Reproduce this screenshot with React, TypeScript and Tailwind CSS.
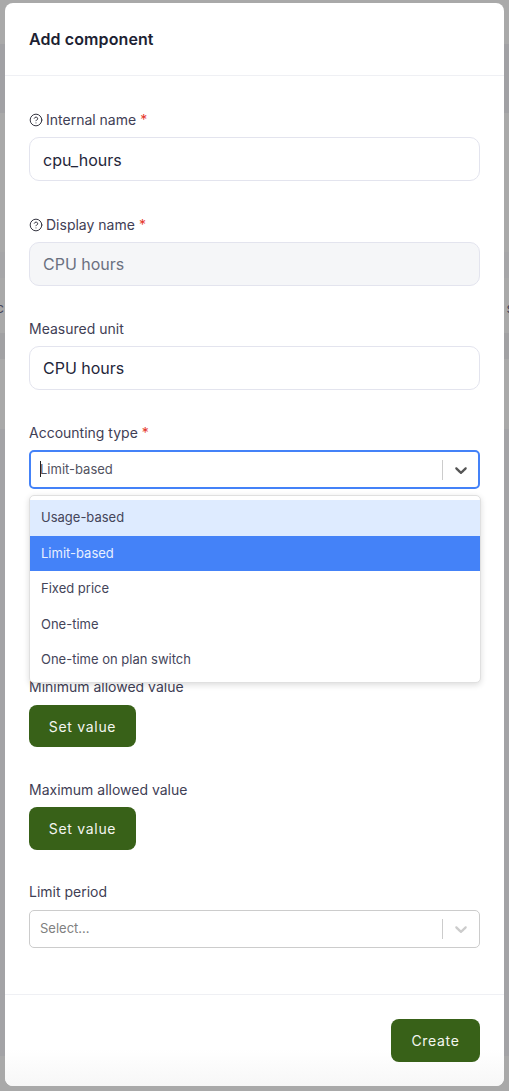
import { CircleHelp } from "lucide-react";

function Label({ text, help, req }: { text: string; help?: boolean; req?: boolean }) {
  return (
    <div className="flex items-center h-[17px] text-[14px] leading-[17px] font-normal text-[#3f4055]">
      {help && <CircleHelp size={14} strokeWidth={1.7} className="ml-[-0.5px] mr-[3.5px] mt-[1px] text-[#33333f]" />}
      <span>{text}</span>
      {req && <span className="ml-[4px] text-[#e5382b]">*</span>}
    </div>
  );
}

function Field({ value, disabled, nudge }: { value: string; disabled?: boolean; nudge?: boolean }) {
  return (
    <div
      className={
        "mt-[9px] flex h-[44px] items-center rounded-[10px] border border-[#e3e4ee] px-[13px] text-[16px] " +
        (nudge ? "pt-[1px] " : "") +
        (disabled ? "bg-[#f5f6f8] text-[#6b7080]" : "bg-white text-[#24263a]")
      }
    >
      {value}
    </div>
  );
}

function Chevron({ color }: { color: string }) {
  return (
    <svg width="20" height="20" viewBox="0 0 20 20" fill={color}>
      <path d="M4.516 7.548c0.436-0.446 1.043-0.481 1.576 0l3.908 3.747 3.908-3.747c0.533-0.481 1.141-0.446 1.574 0 0.436 0.445 0.408 1.197 0 1.615-0.406 0.418-4.695 4.502-4.695 4.502-0.217 0.223-0.502 0.335-0.787 0.335s-0.57-0.112-0.789-0.335c0 0-4.287-4.084-4.695-4.502s-0.436-1.17 0-1.615z" />
    </svg>
  );
}

function SetValue({ first }: { first?: boolean }) {
  return (
    <button
      className={
        "flex w-[107px] items-center justify-center rounded-[8px] bg-[#386118] text-[14px] font-normal tracking-[0.7px] text-[#f4f6f0] " +
        (first ? "mt-[10px] h-[42px]" : "mt-[9px] h-[43px]")
      }
    >
      Set value
    </button>
  );
}

const options = ["Usage-based", "Limit-based", "Fixed price", "One-time", "One-time on plan switch"];

export default function App() {
  return (
    <div className="relative h-[1091px] w-[509px] overflow-hidden bg-[#a9a9a9] pl-[5px] pt-[3px] font-['Inter',sans-serif]">
      <div className="absolute inset-0 flex flex-col">
        <div className="h-[44px]" />
        <div className="h-[69px] bg-[#a1a1a4]" />
        <div className="h-[139px]" />
        <div className="h-[26px] bg-[#a6a6a8]" />
        <div className="h-[55px]" />
        <div className="h-[26px] bg-[#a1a1a3]" />
        <div className="h-[70px]" />
        <div className="h-[627px] bg-[#a3a3a6]" />
      </div>
      <span className="absolute left-[-4px] top-[297px] text-[14px] text-[#44455a]">c</span>
      <span className="absolute right-[-5px] top-[297px] text-[14px] text-[#44455a]">s</span>

      <div className="relative flex h-[1083px] w-[499px] flex-col rounded-[8px] bg-white">
        <div className="flex h-[73px] shrink-0 items-center border-b border-[#eff0f4] pb-[1px] pl-[24px] text-[16px] font-semibold tracking-[0.1px] text-[#1d1f33]">
          Add component
        </div>

        <div className="relative flex-1 px-[24px] pt-[35px]">
          <Label text="Internal name" help req />
          <Field value="cpu_hours" nudge />

          <div className="mt-[35px]">
            <Label text="Display name" help req />
            <Field value="CPU hours" disabled />
          </div>

          <div className="mt-[34px]">
            <Label text="Measured unit" />
            <Field value="CPU hours" />
          </div>

          <div className="relative mt-[34px]">
            <Label text="Accounting type" req />
            <div className="mt-[9px] flex h-[39px] items-center rounded-[5px] border-2 border-[#4482f8] bg-white">
              <span className="relative flex-1 pl-[9px] text-[13px] text-[#52535f]">
                <span className="absolute left-[9px] top-[1px] h-[16px] w-px bg-[#222]" />
                Limit-based
              </span>
              <span className="h-[20px] w-px bg-[#cccccc]" />
              <span className="flex w-[35px] justify-center">
                <Chevron color="#555555" />
              </span>
            </div>

            <div className="absolute left-0 right-[-1px] top-[71px] z-10 h-[188px] overflow-hidden rounded-[5px] border border-[#e0e0e0] bg-white pt-[4px] shadow-[0_2px_6px_rgba(0,0,0,0.14)]">
              {options.map((o, i) => (
                <div
                  key={o}
                  className={
                    "flex h-[35.5px] items-center pl-[11px] text-[13px] " +
                    (i === 0 ? "bg-[#deebff] text-[#44455a] " : i === 1 ? "bg-[#4482f8] text-[#e8f0ff] " : "text-[#44455a]")
                  }
                >
                  {o}
                </div>
              ))}
            </div>
          </div>

          <div className="mt-[189px]">
            <Label text="Minimum allowed value" />
            <SetValue first />
          </div>

          <div className="mt-[34px]">
            <Label text="Maximum allowed value" />
            <SetValue />
          </div>

          <div className="mt-[33px]">
            <Label text="Limit period" />
            <div className="mt-[10px] flex h-[38px] items-center rounded-[5px] border border-[#cccccc] bg-white">
              <span className="flex-1 pl-[10px] text-[13px] text-[#808080]">Select...</span>
              <span className="h-[20px] w-px bg-[#cccccc]" />
              <span className="flex w-[36px] justify-center">
                <Chevron color="#cccccc" />
              </span>
            </div>
          </div>
        </div>

        <div className="flex h-[92px] shrink-0 items-start justify-end rounded-b-[8px] border-t border-[#eff0f4] bg-gradient-to-b from-white from-60% to-[#f7f7f7] pr-[24px] pt-[24px]">
          <button className="flex h-[43px] w-[89px] items-center justify-center rounded-[8px] bg-[#386118] text-[14px] font-normal tracking-[0.7px] text-[#f4f6f0]">
            Create
          </button>
        </div>
      </div>
    </div>
  );
}
